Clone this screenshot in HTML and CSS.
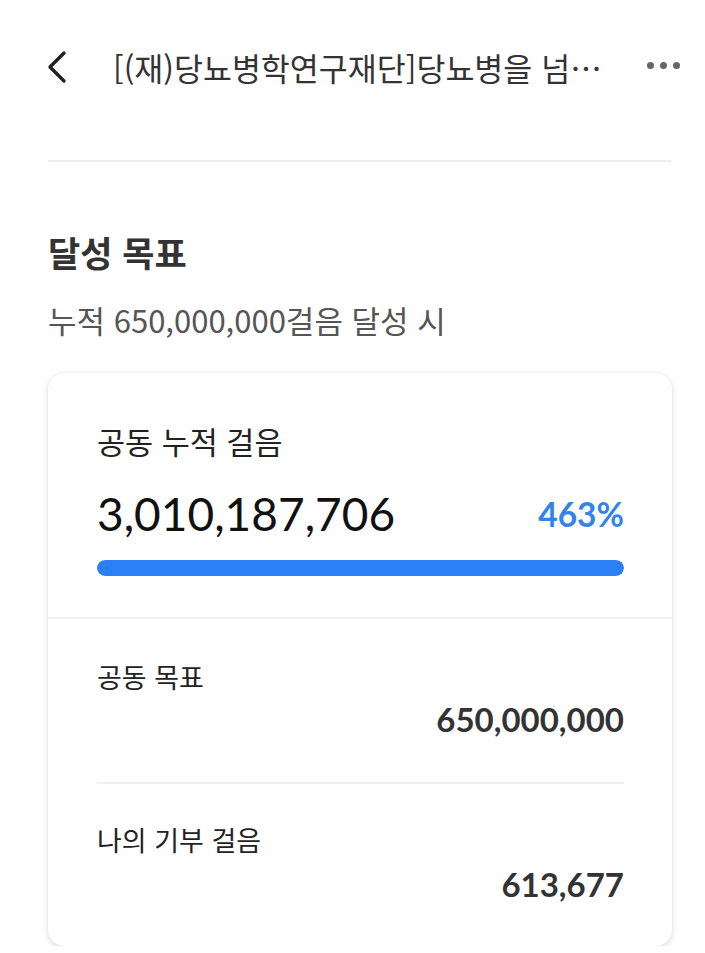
FILE: index.html
```html
<!DOCTYPE html>
<html lang="ko">
<head>
<meta charset="utf-8">
<title>달성 목표</title>
<link rel="stylesheet" href="styles.css">
</head>
<body>
<div class="page">
  <header class="topbar">
    <svg class="back" width="24" height="34" viewBox="0 0 24 34" aria-hidden="true">
      <path d="M19 3 L5 17 L19 31" fill="none" stroke="#222" stroke-width="3.4" stroke-linecap="round" stroke-linejoin="round"/>
    </svg>
    <div class="title">[(재)당뇨병학연구재단]당뇨병을 넘…</div>
    <div class="more" aria-hidden="true"><span></span><span></span><span></span></div>
  </header>
  <div class="divider"></div>

  <h2 class="heading">달성 목표</h2>
  <p class="sub">누적 650,000,000걸음 달성 시</p>

  <section class="card">
    <div class="card-top">
      <div class="label-lg">공동 누적 걸음</div>
      <div class="total-row">
        <span class="total">3,010,187,706</span>
        <span class="pct">463%</span>
      </div>
      <div class="bar"><div class="bar-fill" style="width:100%"></div></div>
    </div>
    <div class="card-bottom">
      <div class="stat">
        <div class="label">공동 목표</div>
        <div class="value">650,000,000</div>
      </div>
      <div class="stat-line"></div>
      <div class="stat stat-last">
        <div class="label">나의 기부 걸음</div>
        <div class="value">613,677</div>
      </div>
    </div>
  </section>
</div>
</body>
</html>
```

FILE: styles.css
```css
* { box-sizing: border-box; }
html, body { margin: 0; padding: 0; background: #fff; }
body {
  font-family: "Noto Sans CJK KR", "Noto Sans", sans-serif;
  color: #333;
}
.page { padding: 0 33px 0 48px; }

.topbar {
  height: 134px;
  display: flex;
  align-items: center;
}
.back { margin-left: -3px; flex: none; }
.title {
  margin-left: 44px;
  font-size: 31.5px;
  line-height: 40px;
  color: #333;
  white-space: nowrap;
  flex: 1;
}
.more {
  display: flex;
  gap: 6px;
  margin-right: -8px;
  margin-top: -4px;
}
.more span {
  width: 7px; height: 7px; border-radius: 50%;
  background: #666;
}

.divider {
  margin-top: 26px;
  height: 2px;
  background: #eeeeee;
  margin-right: 1px;
}

.heading {
  margin: 68px 0 0;
  font-size: 35px;
  line-height: 44px;
  font-weight: 700;
  color: #333;
}
.sub {
  margin: 26px 0 0;
  font-size: 31px;
  line-height: 40px;
  color: #555;
}

.card {
  margin-top: 33px;
  background: #fff;
  border-radius: 16px;
  box-shadow: 0 2px 6px rgba(0,0,0,0.14), 0 0 1px rgba(0,0,0,0.1);
  overflow: hidden;
}
.card-top {
  padding: 48px 48px 41px 49px;
  border-bottom: 2px solid #f2f2f2;
}
.label-lg {
  font-size: 30.5px;
  line-height: 40px;
  color: #222;
}
.total-row {
  margin-top: 25px;
  display: flex;
  justify-content: space-between;
  align-items: center;
}
.total {
  font-family: Lato, "Noto Sans", sans-serif;
  font-size: 46px;
  line-height: 56px;
  color: #111;
}
.pct {
  font-family: Lato, "Noto Sans", sans-serif;
  font-weight: 700;
  font-size: 33.5px;
  line-height: 40px;
  color: #3384ea;
}
.bar {
  margin-top: 18px;
  height: 16px;
  border-radius: 8px;
  background: #e8eef8;
  overflow: hidden;
}
.bar-fill {
  height: 100%;
  background: #2a80f5;
  border-radius: 8px;
}

.card-bottom { padding: 0 48px 42px 49px; }
.stat { padding-top: 40px; }
.stat-last { padding-top: 38px; }
.label {
  font-size: 27px;
  line-height: 36px;
  color: #222;
}
.value {
  margin-top: 4px;
  text-align: right;
  font-family: Lato, "Noto Sans", sans-serif;
  font-weight: 700;
  font-size: 33px;
  line-height: 40px;
  color: #333;
}
.stat-line {
  margin-top: 43px;
  height: 2px;
  background: #f0f0f0;
}
.stat-last .value { margin-top: 6px; }
```
